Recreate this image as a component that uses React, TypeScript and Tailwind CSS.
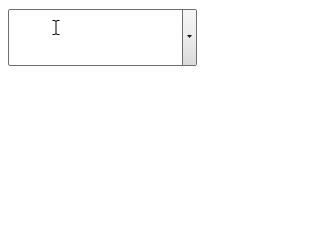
import React from "react";

export default function App() {
  return (
    <div className="w-[204px] h-[244px] bg-white relative" style={{ fontFamily: '"Liberation Sans", sans-serif' }}>
      <div className="absolute left-[8px] top-[9px] w-[189px] h-[57px] border border-[#6e6e6e] rounded-[2px] flex overflow-hidden bg-white">
        <div className="flex-1" />
        <div className="w-[14px] border-l border-[#6e6e6e] bg-gradient-to-b from-[#f6f6f6] via-[#ececec] to-[#d9d9d9] flex items-center justify-center">
          <svg width="5" height="3" viewBox="0 0 5 3" className="mt-[-2px]">
            <path d="M0 0H5L2.5 3Z" fill="#111" />
          </svg>
        </div>
      </div>
      <svg className="absolute left-[52px] top-[20px]" width="8" height="15" viewBox="0 0 8 15">
        <path d="M0.5 0.5H3M5 0.5H7.5M4 1V14M0.5 14.5H3M5 14.5H7.5M3 1H5M3 14H5" stroke="#000" strokeWidth="1" fill="none" />
      </svg>
    </div>
  );
}
